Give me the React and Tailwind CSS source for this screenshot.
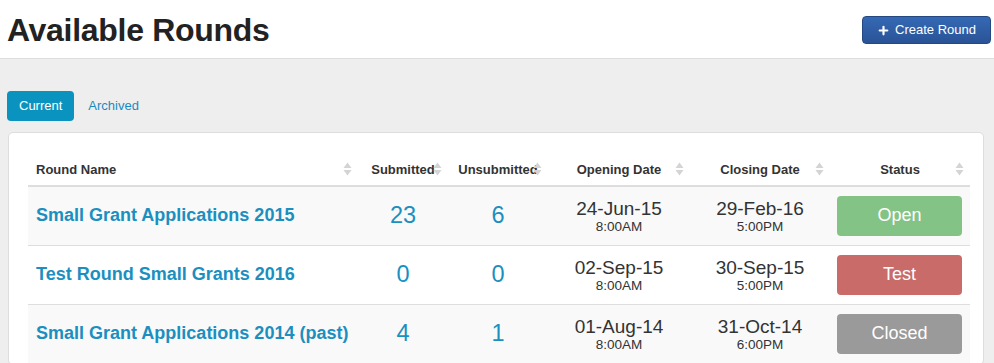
import { Plus } from 'lucide-react'

const rounds = [
  { name: 'Small Grant Applications 2015', sub: 23, unsub: 6, open: '24-Jun-15', openTime: '8:00AM', close: '29-Feb-16', closeTime: '5:00PM', status: 'Open' },
  { name: 'Test Round Small Grants 2016', sub: 0, unsub: 0, open: '02-Sep-15', openTime: '8:00AM', close: '30-Sep-15', closeTime: '5:00PM', status: 'Test' },
  { name: 'Small Grant Applications 2014 (past)', sub: 4, unsub: 1, open: '01-Aug-14', openTime: '8:00AM', close: '31-Oct-14', closeTime: '6:00PM', status: 'Closed' },
]

const statusColor = {
  Open: 'bg-[#84c386]',
  Test: 'bg-[#c96b68]',
  Closed: 'bg-[#9a9a9a]',
}

function SortIcon() {
  return (
    <svg width="9" height="14" viewBox="0 0 9 14" className="absolute right-[6px] top-1/2 -translate-y-1/2">
      <path d="M4.5 0.5 L8.5 6 L0.5 6 Z" fill="#d4d4d4" />
      <path d="M4.5 13.5 L8.5 8 L0.5 8 Z" fill="#d4d4d4" />
    </svg>
  )
}

function Th({ children, align = 'center' }) {
  return (
    <th className={`relative h-[34px] px-2 pt-[3px] text-[13px] font-bold text-[#333] border-b-2 border-[#dddddd] ${align === 'left' ? 'text-left' : 'text-center'}`}>
      {children}
      <SortIcon />
    </th>
  )
}

function App() {
  return (
    <div className="w-[994px] h-[363px] overflow-hidden bg-[#eeeeee] font-['Liberation_Sans',Arial,sans-serif]">
      <div className="h-[59px] bg-white border-b border-[#dddddd] flex items-start justify-between pl-[7px] pr-[3px]">
        <h1 className="mt-[12px] text-[32px] font-bold text-[#222] tracking-[-0.3px] leading-[36px]">Available Rounds</h1>
        <button className="mt-[16px] h-[28px] px-[14px] flex items-center gap-[5px] rounded-[4px] border border-[#24487f] bg-gradient-to-b from-[#3569b5] to-[#2a5396] text-white text-[13px]">
          <Plus size={13} strokeWidth={4} />
          Create Round
        </button>
      </div>

      <div className="pl-[7px] pt-[32px] flex items-center gap-[14px]">
        <span className="h-[30px] px-[12px] flex items-center rounded-[4px] bg-[#0b93c0] text-white text-[13px]">Current</span>
        <span className="text-[13px] text-[#1a8ac0]">Archived</span>
      </div>

      <div className="mt-[11px] ml-[8px] w-[976px] bg-white border border-[#dddddd] rounded-[5px] pl-[19px] pr-[13px] pt-[19px]">
        <table className="w-[942px] table-fixed border-collapse">
          <colgroup>
            <col className="w-[330px]" />
            <col className="w-[90px]" />
            <col className="w-[100px]" />
            <col className="w-[142px]" />
            <col className="w-[140px]" />
            <col className="w-[140px]" />
          </colgroup>
          <thead>
            <tr>
              <Th align="left">Round Name</Th>
              <Th>Submitted</Th>
              <Th>Unsubmitted</Th>
              <Th>Opening Date</Th>
              <Th>Closing Date</Th>
              <Th>Status</Th>
            </tr>
          </thead>
          <tbody>
            {rounds.map((r, i) => (
              <tr key={r.name} className={`h-[59px] border-b border-[#dddddd] ${i % 2 === 0 ? 'bg-[#f9f9f9]' : 'bg-white'}`}>
                <td className="px-2 text-[18px] font-bold text-[#1a8fc0]">{r.name}</td>
                <td className="text-center text-[23.5px] text-[#1a8fc0]">{r.sub}</td>
                <td className="text-center text-[23.5px] text-[#1a8fc0]">{r.unsub}</td>
                <td className="text-center text-[#333]">
                  <div className="text-[19px] leading-[21px]">{r.open}</div>
                  <div className="text-[13.5px] leading-[15px]">{r.openTime}</div>
                </td>
                <td className="text-center text-[#333]">
                  <div className="text-[19px] leading-[21px]">{r.close}</div>
                  <div className="text-[13.5px] leading-[15px]">{r.closeTime}</div>
                </td>
                <td className="pl-[7px] pr-[8px]">
                  <div className={`h-[40px] rounded-[4px] flex items-center justify-center text-white text-[18px] ${statusColor[r.status]}`}>
                    {r.status}
                  </div>
                </td>
              </tr>
            ))}
          </tbody>
        </table>
      </div>
    </div>
  )
}

export default App
